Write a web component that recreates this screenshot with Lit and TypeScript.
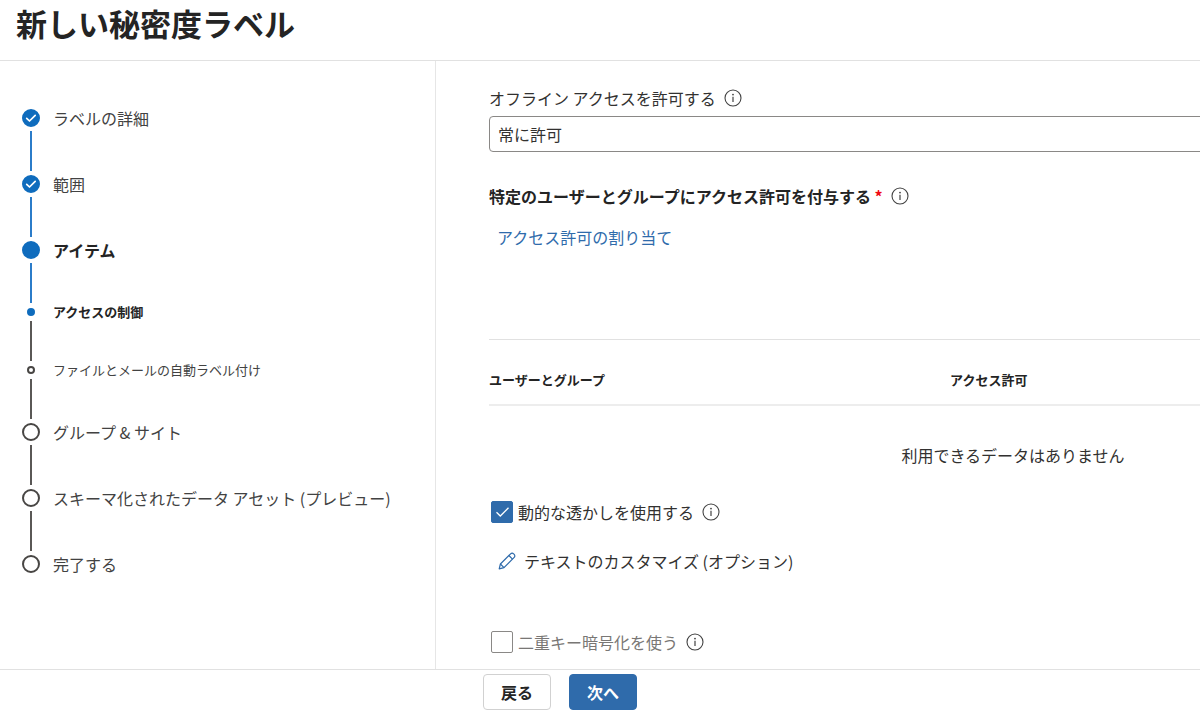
import { LitElement, html, css, svg, nothing } from "lit";
import { customElement, property, state } from "lit/decorators.js";
import { classMap } from "lit/directives/class-map.js";

type StepState = "done" | "current" | "pending";

interface Step {
  label: string;
  state: StepState;
  sub?: boolean;
  reached?: boolean;
}

const STEPS: Step[] = [
  { label: "ラベルの詳細", state: "done", reached: true },
  { label: "範囲", state: "done", reached: true },
  { label: "アイテム", state: "current", reached: true },
  { label: "アクセスの制御", state: "current", sub: true },
  { label: "ファイルとメールの自動ラベル付け", state: "pending", sub: true },
  { label: "グループ & サイト", state: "pending" },
  { label: "スキーマ化されたデータ アセット (プレビュー)", state: "pending" },
  { label: "完了する", state: "pending" },
];

@customElement("wizard-steps")
class WizardSteps extends LitElement {
  @property({ attribute: false }) steps: Step[] = [];

  static styles = css`
    :host {
      display: block;
    }
    .list {
      list-style: none;
      margin: 0;
      padding: 0;
    }
    .step {
      display: grid;
      grid-template-columns: 18px 1fr;
      grid-template-rows: 18px auto;
      column-gap: 13px;
      align-items: center;
      justify-items: center;
      padding-top: 4px;
      color: #424242;
    }
    .step.sub {
      padding-top: 0;
      font-size: 13px;
    }
    .label {
      justify-self: start;
      line-height: 18px;
      white-space: nowrap;
    }
    .current {
      color: #242424;
      font-weight: 700;
    }
    .dot {
      box-sizing: border-box;
      width: 18px;
      height: 18px;
      border: 2px solid #484644;
      border-radius: 50%;
      display: grid;
      place-items: center;
    }
    .sub .dot {
      width: 8px;
      height: 8px;
    }
    .done .dot,
    .current .dot {
      border-color: #0f6cbd;
      background: #0f6cbd;
    }
    .tick {
      width: 14px;
      height: 14px;
    }
    .line {
      width: 2px;
      height: 40px;
      margin-top: 4px;
      background: #5a5856;
    }
    .sub .line {
      margin-top: 0;
    }
    .reached .line {
      background: #2b7cc9;
    }
  `;

  render() {
    return html`<ol class="list">
      ${this.steps.map(
        (s, i) => html`<li
          class=${classMap({
            step: true,
            sub: !!s.sub,
            reached: !!s.reached,
            [s.state]: true,
          })}
        >
          <span class="dot"
            >${s.state === "done"
              ? html`<svg class="tick" viewBox="0 0 14 14" aria-hidden="true">
                  <path d="M2.7 7.3 5.5 10 11.2 4.3" fill="none" stroke="#fff" stroke-width="1.7" stroke-linecap="round" stroke-linejoin="round" />
                </svg>`
              : nothing}</span
          >
          <span class="label">${s.label}</span>
          ${i < this.steps.length - 1 ? html`<span class="line"></span>` : nothing}
        </li>`,
      )}
    </ol>`;
  }
}

@customElement("info-button")
class InfoButton extends LitElement {
  static styles = css`
    :host {
      display: flex;
    }
    .info {
      display: flex;
      padding: 0;
      border: 0;
      background: none;
      color: #424242;
      cursor: pointer;
    }
    .glyph {
      width: 18px;
      height: 18px;
    }
  `;

  render() {
    return html`<button class="info" type="button" aria-label="情報">
      <svg class="glyph" viewBox="0 0 18 18" aria-hidden="true">
        <circle cx="9" cy="9" r="8" fill="none" stroke="currentColor" stroke-width="1.1" />
        <circle cx="9" cy="5.6" r="0.9" fill="currentColor" />
        <path d="M9 7.8V13" stroke="currentColor" stroke-width="1.2" />
      </svg>
    </button>`;
  }
}

const pencil = svg`
  <path d="M1.2 16.8 2.4 12 12.6 1.8a2.1 2.1 0 0 1 3 0l.6.6a2.1 2.1 0 0 1 0 3L6 15.6Z" />
  <path d="M10.9 3.5 14.5 7.1M2.4 12 6 15.6" />
`;

@customElement("app-root")
class AppRoot extends LitElement {
  @state() private watermark = true;

  static styles = css`
    :host {
      display: flex;
      flex-direction: column;
      height: 100vh;
      overflow: hidden;
      background: #fff;
      color: #323130;
      font-family: "Noto Sans CJK JP", "Noto Sans", sans-serif;
      font-size: 16px;
      line-height: 24px;
    }
    .header {
      padding: 3px 16px 17px;
      border-bottom: 1px solid #e1e1e1;
    }
    .title {
      margin: 0;
      font-size: 31px;
      line-height: 40px;
      font-weight: 700;
      color: #242424;
    }
    .body {
      flex: 1;
      min-height: 0;
      display: grid;
      grid-template-columns: 435px 1fr;
    }
    .side {
      padding: 44px 16px 0 22px;
    }
    .content {
      min-width: 0;
      overflow: hidden;
      border-left: 1px solid #e6e6e6;
      padding: 25px 0 0 53px;
    }
    .form {
      min-width: 1048px;
    }
    .row {
      display: flex;
      align-items: center;
      gap: 8px;
    }
    .select {
      display: block;
      box-sizing: border-box;
      width: 100%;
      height: 36px;
      margin: 6px 0 32px;
      padding: 0 8px;
      appearance: none;
      border: 1px solid #8a8886;
      border-radius: 4px;
      background: #fff;
      color: inherit;
      font: inherit;
    }
    .heading {
      margin: 0;
      font-size: 16px;
      line-height: 24px;
      color: #242424;
    }
    .required {
      color: #f00a14;
    }
    .assign {
      display: inline-block;
      margin: 17px 8px 90px;
      color: #2f6bab;
      text-decoration: none;
    }
    .grid {
      width: 100%;
      border-collapse: separate;
      border-spacing: 0;
      border-top: 1px solid #e1e1e1;
      table-layout: fixed;
    }
    .name {
      width: 44%;
    }
    .th {
      padding: 28px 0 12px;
      border-bottom: 2px solid #ededed;
      text-align: left;
      font-size: 13px;
      color: #242424;
    }
    .empty {
      padding: 37px 0 33px;
      text-align: center;
    }
    .option {
      display: flex;
      align-items: center;
      gap: 5px;
      padding-left: 2px;
    }
    .box {
      flex: none;
      box-sizing: border-box;
      width: 22px;
      height: 22px;
      margin: 0;
      appearance: none;
      border: 1px solid #8a8886;
      border-radius: 2px;
      background: #fff;
    }
    .box:checked {
      border-color: #2f6bab;
      background: #2f6bab;
    }
    .check {
      display: grid;
    }
    .check > * {
      grid-area: 1 / 1;
    }
    .mark {
      width: 22px;
      height: 22px;
      pointer-events: none;
    }
    .disabled {
      color: #797775;
    }
    .customize {
      display: flex;
      align-items: center;
      gap: 8px;
      margin: 25px 0 57px;
      padding: 0 9px;
      border: 0;
      background: none;
      color: inherit;
      font: inherit;
      cursor: pointer;
    }
    .pencil {
      width: 18px;
      height: 18px;
      fill: none;
      stroke: #2f6bab;
      stroke-width: 1.2;
      stroke-linejoin: round;
    }
    .footer {
      display: flex;
      gap: 18px;
      padding: 4px 16px 2px 483px;
      border-top: 1px solid #e1e1e1;
    }
    .btn {
      box-sizing: border-box;
      min-width: 68px;
      height: 36px;
      padding: 0 16px;
      border: 1px solid #d1d1d1;
      border-radius: 4px;
      background: #fff;
      color: #242424;
      font: inherit;
      font-weight: 700;
      cursor: pointer;
    }
    .primary {
      border-color: #2f6bab;
      background: #2f6bab;
      color: #fff;
    }
  `;

  render() {
    return html`
      <header class="header"><h1 class="title">新しい秘密度ラベル</h1></header>
      <div class="body">
        <nav class="side" aria-label="手順"><wizard-steps .steps=${STEPS}></wizard-steps></nav>
        <main class="content">
          <div class="form">
            <div class="row">
              <label for="offline">オフライン アクセスを許可する</label>
              <info-button></info-button>
            </div>
            <select class="select" id="offline">
              <option>常に許可</option>
            </select>

            <div class="row">
              <h2 class="heading">
                特定のユーザーとグループにアクセス許可を付与する <span class="required">*</span>
              </h2>
              <info-button></info-button>
            </div>
            <a class="assign" href="#assign">アクセス許可の割り当て</a>

            <table class="grid">
              <thead>
                <tr>
                  <th class="th name" scope="col">ユーザーとグループ</th>
                  <th class="th" scope="col">アクセス許可</th>
                </tr>
              </thead>
              <tbody>
                <tr>
                  <td class="empty" colspan="2">利用できるデータはありません</td>
                </tr>
              </tbody>
            </table>

            <div class="row">
              <span class="option">
                <span class="check">
                  <input
                    class="box"
                    id="watermark"
                    type="checkbox"
                    .checked=${this.watermark}
                    @change=${(e: Event) => (this.watermark = (e.target as HTMLInputElement).checked)}
                  />
                  ${this.watermark
                    ? html`<svg class="mark" viewBox="0 0 22 22" aria-hidden="true">
                        <path d="M5.5 11.2 9.3 15 17.5 6.8" fill="none" stroke="#fff" stroke-width="1.3" />
                      </svg>`
                    : nothing}
                </span>
                <label for="watermark">動的な透かしを使用する</label>
              </span>
              <info-button></info-button>
            </div>
            <button class="customize" type="button">
              <svg class="pencil" viewBox="0 0 18 18" aria-hidden="true">${pencil}</svg>
              テキストのカスタマイズ (オプション)
            </button>

            <div class="row">
              <span class="option disabled">
                <input class="box" id="dke" type="checkbox" disabled />
                <label for="dke">二重キー暗号化を使う</label>
              </span>
              <info-button></info-button>
            </div>
          </div>
        </main>
      </div>
      <footer class="footer">
        <button class="btn" type="button">戻る</button>
        <button class="btn primary" type="button">次へ</button>
      </footer>
    `;
  }
}
